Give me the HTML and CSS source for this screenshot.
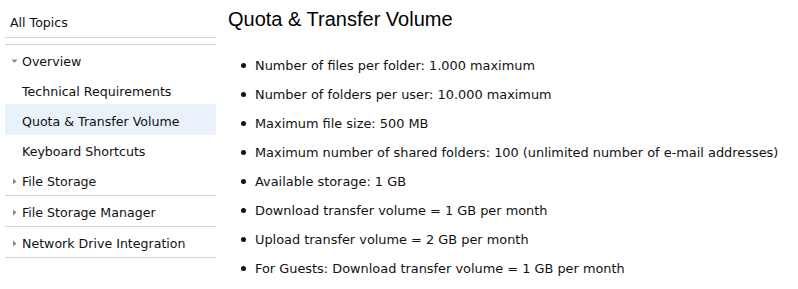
FILE: index.html
```
<!DOCTYPE html>
<html>
<head>
<meta charset="utf-8">
<link rel="stylesheet" href="styles.css">
</head>
<body>
<div class="page">
  <nav class="sidebar">
    <div class="all-topics">All Topics</div>
    <ul class="toc">
      <li class="item open"><svg class="tri" width="7" height="7" viewBox="0 0 7 7"><polygon points="0.5,1.5 6.5,1.5 3.5,5" fill="#7d8da0"/></svg>Overview</li>
      <li class="item sub">Technical Requirements</li>
      <li class="item sub active">Quota &amp; Transfer Volume</li>
      <li class="item sub">Keyboard Shortcuts</li>
      <li class="item closed"><svg class="tri" width="7" height="7" viewBox="0 0 7 7"><polygon points="2,0.5 5.5,3.5 2,6.5" fill="#7d8da0"/></svg>File Storage</li>
      <li class="item closed"><svg class="tri" width="7" height="7" viewBox="0 0 7 7"><polygon points="2,0.5 5.5,3.5 2,6.5" fill="#7d8da0"/></svg>File Storage Manager</li>
      <li class="item closed"><svg class="tri" width="7" height="7" viewBox="0 0 7 7"><polygon points="2,0.5 5.5,3.5 2,6.5" fill="#7d8da0"/></svg>Network Drive Integration</li>
    </ul>
  </nav>
  <main class="content">
    <h1 class="title">Quota &amp; Transfer Volume</h1>
    <ul class="facts">
      <li>Number of files per folder: 1.000 maximum</li>
      <li>Number of folders per user: 10.000 maximum</li>
      <li>Maximum file size: 500 MB</li>
      <li>Maximum number of shared folders: 100 (unlimited number of e-mail addresses)</li>
      <li>Available storage: 1 GB</li>
      <li>Download transfer volume = 1 GB per month</li>
      <li>Upload transfer volume = 2 GB per month</li>
      <li>For Guests: Download transfer volume = 1 GB per month</li>
    </ul>
  </main>
</div>
</body>
</html>
```

FILE: styles.css
```
html, body {
  margin: 0;
  padding: 0;
  background: #fff;
}
body {
  font-family: "DejaVu Sans", Verdana, sans-serif;
  font-size: 12px;
  color: #111;
}
.page {
  display: flex;
  align-items: flex-start;
}
.sidebar {
  width: 211px;
  margin-left: 5px;
  flex: none;
  font-size: 12.6px;
}
.all-topics {
  padding: 8px 0 0 5px;
  line-height: 29px;
  border-bottom: 1px solid #d4d4d4;
}
.toc {
  list-style: none;
  margin: 6px 0 0 0;
  padding: 0;
  border-top: 1px solid #d4d4d4;
}
.item {
  display: flex;
  align-items: center;
  box-sizing: border-box;
  height: 30px;
  padding-top: 2px;
  padding-left: 17px;
}
.item .tri {
  margin-left: -11px;
  margin-right: 4px;
}
.item.active {
  background: #e9f1fb;
  margin-top: -1px;
  height: 31px;
  padding-top: 3px;
}
.item.closed {
  height: 31px;
  border-bottom: 1px solid #d4d4d4;
}
.content {
  margin-left: 12px;
  flex: 1;
}
.title {
  margin: 0;
  padding-top: 8px;
  font-family: "Liberation Sans", Arial, sans-serif;
  font-weight: normal;
  font-size: 20px;
  line-height: 22px;
  color: #000;
}
.facts {
  list-style: none;
  margin: 21px 0 0 0;
  padding: 0 0 0 13px;
  font-size: 12.9px;
}
.facts li {
  display: flex;
  align-items: center;
  height: 29px;
}
.facts li::before {
  content: "";
  width: 5px;
  height: 5px;
  border-radius: 50%;
  background: #111;
  margin-right: 9px;
  flex: none;
}
```
